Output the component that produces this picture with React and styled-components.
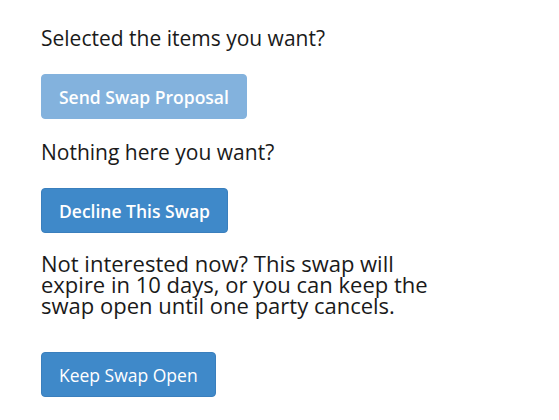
import React from 'react';
import styled, { createGlobalStyle } from 'styled-components';

const GlobalStyle = createGlobalStyle`
  body {
    margin: 0;
    background: #ffffff;
    font-family: "Open Sans", "Noto Sans", sans-serif;
    color: #1a1a1a;
  }
`;

function App() {
  return (
    <>
      <GlobalStyle />
      <Wrapper>
        <Prompt>Selected the items you want?</Prompt>
        <ActionButton disabled bold>
          Send Swap Proposal
        </ActionButton>
        <Prompt>Nothing here you want?</Prompt>
        <ActionButton bold>Decline This Swap</ActionButton>
        <Note>
          Not interested now? This swap will expire in 10 days, or you can
          keep the swap open until one party cancels.
        </Note>
        <ActionButton>Keep Swap Open</ActionButton>
      </Wrapper>
    </>
  );
}

const Wrapper = styled.main`
  display: flex;
  flex-direction: column;
  align-items: flex-start;
  padding: 25px 0 0 41px;
  width: 400px;
`;

const Prompt = styled.p`
  margin: 0 0 23px;
  font-size: 21px;
  line-height: 26px;
`;

const Note = styled(Prompt)`
  margin-bottom: 36px;
  font-size: 22px;
  line-height: 21px;
`;

const ActionButton = styled.button`
  height: 45px;
  margin-bottom: 20px;
  padding: 0 17px;
  font-family: inherit;
  font-size: 17.5px;
  font-weight: ${({ bold }) => (bold ? 600 : 400)};
  color: #ffffff;
  background-color: #3f89c9;
  border: 1px solid #3a7fbd;
  border-radius: 4px;
  cursor: pointer;

  &:disabled {
    background-color: #83b2dd;
    border-color: #83b2dd;
    cursor: default;
  }
`;

export default App;
